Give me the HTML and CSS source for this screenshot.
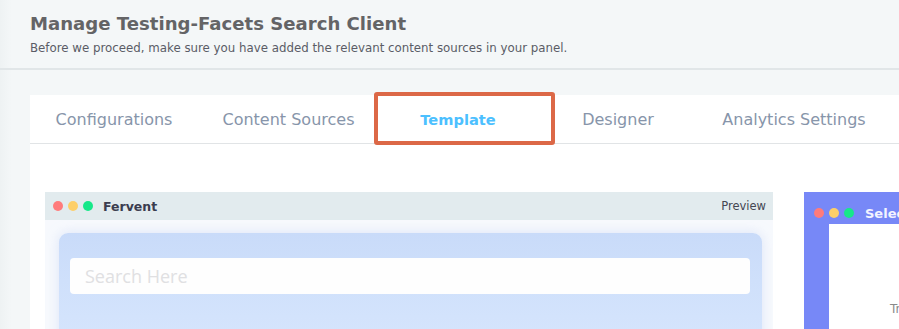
FILE: index.html
```html
<!DOCTYPE html>
<html lang="en">
<head>
<meta charset="utf-8">
<title>Manage Testing-Facets Search Client</title>
<link rel="stylesheet" href="styles.css">
</head>
<body>
<header class="page-head">
  <h1 class="page-title">Manage Testing-Facets Search Client</h1>
  <p class="page-sub">Before we proceed, make sure you have added the relevant content sources in your panel.</p>
</header>
<main class="main">
  <section class="card">
    <nav class="tabs">
      <div class="tab">Configurations</div>
      <div class="tab">Content Sources</div>
      <div class="tab tab-active">Template</div>
      <div class="tab">Designer</div>
      <div class="tab">Analytics Settings</div>
      <div class="highlight"></div>
    </nav>
    <div class="card-body">
      <div class="window">
        <div class="win-bar">
          <span class="dot dot-r"></span><span class="dot dot-y"></span><span class="dot dot-g"></span>
          <span class="win-name">Fervent</span>
          <span class="win-preview">Preview</span>
        </div>
        <div class="win-body">
          <div class="hero">
            <div class="search">Search Here</div>
          </div>
        </div>
      </div>
      <div class="window2">
        <div class="win2-bar">
          <span class="dot dot-r"></span><span class="dot dot-y"></span><span class="dot dot-g"></span>
          <span class="win2-name">Select</span>
        </div>
        <div class="win2-body">
          <span class="win2-text">Tr</span>
        </div>
      </div>
    </div>
  </section>
</main>
</body>
</html>
```
FILE: styles.css
```css
* { box-sizing: border-box; }
html, body { margin: 0; padding: 0; }
body {
  width: 899px;
  height: 329px;
  overflow: hidden;
  background: #f3f7f8;
  font-family: "DejaVu Sans", "Open Sans", sans-serif;
}
.page-head {
  height: 70px;
  padding: 11px 30px 0;
  border-bottom: 2px solid #e1e6e8;
  background: linear-gradient(90deg, #eef2f3 0, #f4f7f8 12px);
}
.page-title {
  margin: 0;
  font-size: 18.1px;
  font-weight: 600;
  color: #646466;
  line-height: 26px;
}
.page-sub {
  margin: 3px 0 0;
  font-size: 11.8px;
  color: #5a5c66;
  line-height: 16px;
}
.main {
  height: 259px;
  overflow: hidden;
  padding: 25px 0 0 30px;
  background: linear-gradient(90deg, #eef2f3 0, #f4f7f8 12px);
}
.card {
  background: #fff;
  height: 300px;
}
.tabs {
  position: relative;
  display: grid;
  grid-template-columns: 168px 181px 158px 162px 190px;
  height: 49px;
  border-bottom: 1px solid #e1e4e6;
  align-items: center;
}
.tab {
  text-align: center;
  font-size: 16px;
  color: #8795aa;
  white-space: nowrap;
}
.tab-active {
  font-size: 14.6px;
  color: #4cc0ff;
  font-weight: 700;
}
.highlight {
  position: absolute;
  left: 344px;
  top: -3px;
  width: 181px;
  height: 53px;
  border: 4px solid #dc6847;
  border-radius: 3px;
}
.card-body {
  display: flex;
  gap: 31px;
  padding: 48px 0 0 15px;
}
.window {
  flex: 0 0 728px;
  height: 200px;
  background: #f7f9fd;
}
.win-bar {
  height: 28px;
  background: #e2ebee;
  display: flex;
  align-items: center;
  padding: 0 7px 0 8px;
}
.dot {
  width: 10px;
  height: 10px;
  border-radius: 50%;
  margin-right: 5px;
  flex: none;
}
.dot-r { background: #ff7b7b; }
.dot-y { background: #fdcf69; }
.dot-g { background: #16e889; }
.win-name {
  margin-left: 5px;
  font-size: 12.5px;
  font-weight: 700;
  color: #3b3d4f;
}
.win-preview {
  margin-left: auto;
  font-size: 11.5px;
  color: #444652;
}
.win-body {
  padding: 13px 11px 0 14px;
}
.hero {
  height: 120px;
  border-radius: 9px;
  background: linear-gradient(180deg, #c9dbf9 0, #cfe0fb 40%, #d7e6fd 100%);
  box-shadow: 0 0 12px rgba(200, 215, 245, 0.6);
  padding: 25px 12px 0 11px;
}
.search {
  height: 36px;
  background: #fefefe;
  border-radius: 4px;
  padding: 0 15px;
  font-family: "Open Sans", "DejaVu Sans", sans-serif;
  font-size: 18px;
  line-height: 36px;
  color: #e0e0e2;
}
.window2 {
  flex: 0 0 120px;
  height: 200px;
  background: #7788f7;
  display: flex;
  flex-direction: column;
}
.win2-bar {
  height: 32px;
  display: flex;
  align-items: center;
  padding: 10px 0 0 10px;
}
.win2-name {
  margin-left: 6px;
  font-size: 13px;
  font-weight: 700;
  color: #f3f4ff;
  white-space: nowrap;
}
.win2-body {
  flex: 1;
  margin-left: 25px;
  background: #fff;
  padding: 74px 0 0 61px;
}
.win2-text {
  font-size: 12px;
  color: #8a8a8a;
}
```
